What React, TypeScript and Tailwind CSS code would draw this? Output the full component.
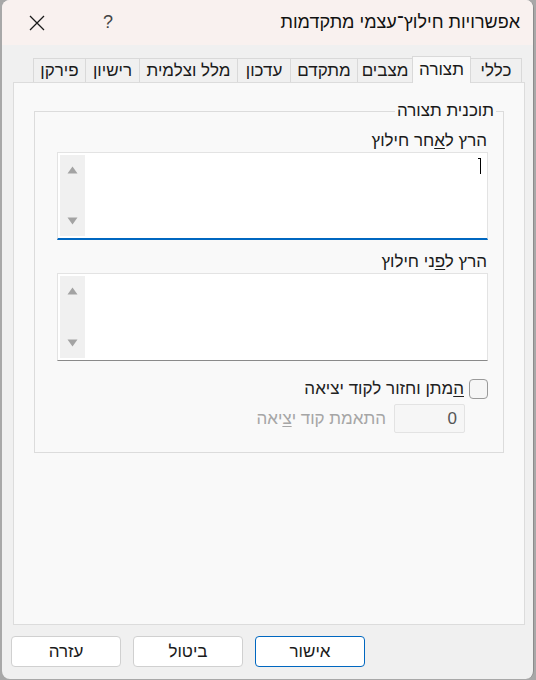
import React from "react";

const F = { fontFamily: '"Liberation Sans", "DejaVu Sans", sans-serif' };

function Scroll() {
  return (
    <div className="w-[25px] bg-[#f0f0f0] flex flex-col items-center justify-between py-[11px] my-[2px] ml-[2px]">
      <svg width="11" height="8" viewBox="0 0 11 8"><path d="M5.5 0.5 L10.5 7.5 L0.5 7.5 Z" fill="#a3a3a3" /></svg>
      <svg width="11" height="8" viewBox="0 0 11 8"><path d="M0.5 0.5 L10.5 0.5 L5.5 7.5 Z" fill="#a3a3a3" /></svg>
    </div>
  );
}

function Tab({ label, w, selected }: { label: string; w: number; selected?: boolean }) {
  if (selected)
    return (
      <div
        style={{ width: w }}
        className="relative z-10 -mb-px h-[27px] bg-[#f9f9f9] border-t border-l border-r border-[#d9d9d9] flex items-start justify-center pt-[3px] leading-[20px] text-[17px] text-[#1a1a1a] -mr-px"
      >
        {label}
      </div>
    );
  return (
    <div
      style={{ width: w }}
      className="h-[24px] bg-[#f0f0f0] border-t border-l border-[#d9d9d9] flex items-start justify-center pt-[2px] leading-[20px] text-[17px] text-[#1a1a1a]"
    >
      {label}
    </div>
  );
}

export default function App() {
  return (
    <div className="w-[536px] h-[680px] bg-[#a8a8a8] pl-[2px] overflow-hidden" style={F}>
      <div className="w-[532px] h-[679px] rounded-[8px] overflow-hidden bg-[#f0f0f0] flex flex-col border-r border-[#8c8c8c]">
        {/* title bar */}
        <div className="h-[45px] bg-[#f9f1ef] flex items-center pl-[27px] pr-[13px]">
          <svg width="16" height="16" viewBox="0 0 16 16">
            <path d="M1 1 L15 15 M15 1 L1 15" stroke="#1a1a1a" strokeWidth="1.3" />
          </svg>
          <span className="ml-[58px] text-[18px] text-[#444]">?</span>
          <span dir="rtl" className="ml-auto text-[18px] text-[#111]">אפשרויות חילוץ־עצמי מתקדמות</span>
        </div>

        {/* tabs */}
        <div dir="rtl" className="mt-[11px] mr-[11px] flex items-end h-[26px]">
          <div className="w-[52px] h-[24px] bg-[#f0f0f0] border-t border-l border-r border-[#d9d9d9] flex items-start justify-center pt-[2px] leading-[20px] text-[17px] text-[#1a1a1a]">כללי</div>
          <Tab label="תצורה" w={59} selected />
          <Tab label="מצבים" w={55} />
          <Tab label="מתקדם" w={67} />
          <Tab label="עדכון" w={53} />
          <Tab label="מלל וצלמית" w={98} />
          <Tab label="רישיון" w={54} />
          <Tab label="פירקן" w={52} />
        </div>

        {/* panel */}
        <div dir="rtl" className="ml-[11px] w-[512px] h-[543px] bg-[#f9f9f9] border border-[#dcdcdc] pt-[18px]">
          <fieldset className="mr-[20px] ml-[20px] h-[352px] border border-[#dcdcdc] pr-[7px] text-[17px] text-[#1a1a1a]">
            <legend className="px-[2px] leading-[20px]">תוכנית תצורה</legend>
            <div className="pr-[9px] mt-[10px] leading-[20px]">
              הרץ ל<span className="underline underline-offset-2">א</span>חר חילוץ
            </div>
            <div className="mt-[1px] mr-[8px] w-[431px] h-[88px] bg-white border border-[#e3e3e3] border-b-2 border-b-[#0067c0] flex flex-row-reverse">
              <Scroll />
              <div className="flex-1 flex justify-start pr-[6px] pt-[5px]">
                <div className="relative w-px h-[16px] bg-black">
                  <div className="absolute -left-[2px] top-0 w-[2px] h-px bg-black" />
                </div>
              </div>
            </div>
            <div className="pr-[9px] mt-[12px] leading-[20px]">
              הרץ ל<span className="underline underline-offset-2">פ</span>ני חילוץ
            </div>
            <div className="mt-[1px] mr-[8px] w-[431px] h-[88px] bg-white border border-[#e3e3e3] border-b-[#8a8a8a] flex flex-row-reverse">
              <Scroll />
              <div className="flex-1" />
            </div>
            <div className="mt-[18px] mr-[8px] flex items-center gap-[5px]">
              <div className="w-[19px] h-[20px] rounded-[4px] border border-[#9a9a9a] bg-[#f6f6f6]" />
              <span className="leading-[20px] text-[#222]">
                <span className="underline underline-offset-2">ה</span>מתן וחזור לקוד יציאה
              </span>
            </div>
            <div className="mt-[5px] mr-[31px] flex items-center gap-[8px]">
              <div className="w-[71px] h-[29px] bg-[#f6f6f6] border border-[#e3e3e3] rounded-[2px] flex items-center pr-[7px] text-[#555]">0</div>
              <span className="text-[#a6a6a6] leading-[20px]">
                התאמת קוד י<span className="underline underline-offset-2">צ</span>יאה
              </span>
            </div>
          </fieldset>
        </div>

        {/* buttons */}
        <div className="mt-[11px] ml-[9px] flex gap-[12px] text-[17px] text-[#1a1a1a]" dir="ltr">
          <button className="w-[110px] h-[31px] bg-white border border-[#d0d0d0] rounded-[4px]">עזרה</button>
          <button className="w-[110px] h-[31px] bg-white border border-[#d0d0d0] rounded-[4px]">ביטול</button>
          <button className="w-[110px] h-[31px] bg-white border border-[#0067c0] rounded-[4px]">אישור</button>
        </div>
      </div>
    </div>
  );
}
